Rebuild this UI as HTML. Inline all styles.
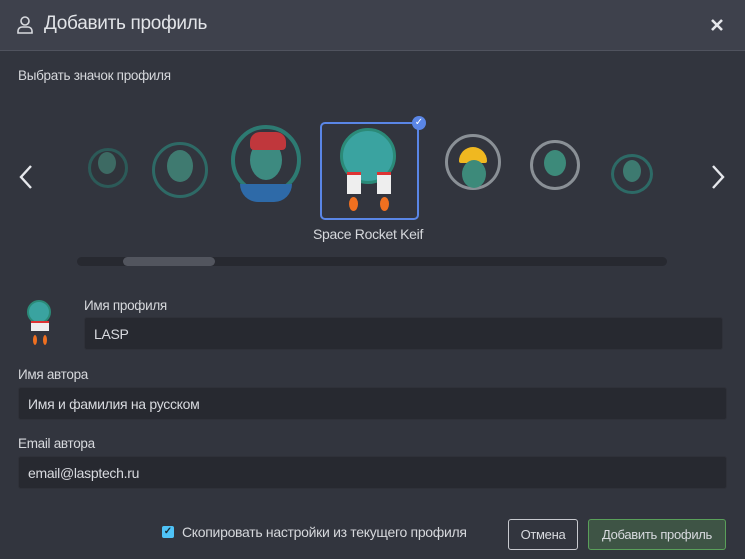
<!DOCTYPE html>
<html><head><meta charset="utf-8"><style>
*{box-sizing:border-box;margin:0;padding:0}
body{width:745px;height:559px;background:#32353e;font-family:"Liberation Sans",sans-serif;color:#d6d8dc;position:relative;overflow:hidden}
.hdr{position:absolute;left:0;top:0;width:745px;height:51px;background:#3e414c;border-bottom:1px solid #50535e}
.hdr .t{position:absolute;left:44px;top:13px;font-size:19px;color:#e2e4e8;letter-spacing:-0.3px}
.lbl{position:absolute;font-size:13.5px;color:#d6d8dc;letter-spacing:-0.3px}
.inp{position:absolute;background:#272930;border:1px solid #2f3139;border-radius:3px;font-size:14px;color:#d8dadf;padding-left:9px;display:flex;align-items:center;letter-spacing:-0.3px}
.av{position:absolute;border-radius:50%}
.btn{position:absolute;border-radius:3px;font-size:13px;display:flex;align-items:center;justify-content:center;letter-spacing:-0.3px}
</style></head><body>
<div class="hdr">
<svg style="position:absolute;left:16px;top:15px" width="18" height="20" viewBox="0 0 18 20" fill="none" stroke="#d8dadf" stroke-width="1.6"><circle cx="9" cy="6" r="4"/><path d="M2 18v-2a4 4 0 0 1 4-4h6a4 4 0 0 1 4 4v2z"/></svg>
<div class="t">Добавить профиль</div>
<svg style="position:absolute;left:710px;top:18px" width="14" height="14" viewBox="0 0 14 14" stroke="#e6e8ec" stroke-width="2.6"><path d="M2 2L12 12M12 2L2 12"/></svg>
</div>
<div class="lbl" style="left:18px;top:68px">Выбрать значок профиля</div>
<svg style="position:absolute;left:18px;top:164px" width="16" height="26" viewBox="0 0 16 26" fill="none" stroke="#e6e8ec" stroke-width="2.4"><path d="M13 2L3 13L13 24"/></svg>
<svg style="position:absolute;left:710px;top:164px" width="16" height="26" viewBox="0 0 16 26" fill="none" stroke="#e6e8ec" stroke-width="2.4"><path d="M3 2L13 13L3 24"/></svg>
<!-- avatars -->
<div class="av" style="left:88px;top:148px;width:40px;height:40px;border:3px solid #2c5a58;background:#30343b"></div>
<div class="av" style="left:98px;top:152px;width:18px;height:22px;background:#3d6a63"></div>
<div class="av" style="left:152px;top:142px;width:56px;height:56px;border:3px solid #2e6a66"></div>
<div class="av" style="left:167px;top:150px;width:26px;height:32px;background:#3f7a70"></div>
<div class="av" style="left:231px;top:125px;width:70px;height:70px;border:4px solid #2d7a72"></div>
<div class="av" style="left:250px;top:140px;width:32px;height:40px;background:#3d8a80"></div>
<div style="position:absolute;left:250px;top:132px;width:36px;height:18px;background:#c0373c;border-radius:10px 10px 4px 4px"></div>
<div style="position:absolute;left:240px;top:184px;width:52px;height:18px;background:#2e6aa8;border-radius:0 0 26px 26px"></div>
<div style="position:absolute;left:320px;top:122px;width:99px;height:98px;border:2px solid #5a86e6;border-radius:5px"></div>
<div style="position:absolute;left:412px;top:116px;width:14px;height:14px;border-radius:50%;background:#5a86e6;color:#fff;font-size:10px;text-align:center;line-height:14px">✓</div>
<div class="av" style="left:340px;top:128px;width:56px;height:56px;border:3px solid #2b8a78;background:#3aa3a0"></div>
<div style="position:absolute;left:347px;top:172px;width:14px;height:22px;background:#eee;border-top:3px solid #d33"></div>
<div style="position:absolute;left:377px;top:172px;width:14px;height:22px;background:#eee;border-top:3px solid #d33"></div>
<div class="av" style="left:349px;top:197px;width:9px;height:14px;background:#f07020"></div>
<div class="av" style="left:380px;top:197px;width:9px;height:14px;background:#f07020"></div>
<div style="position:absolute;left:313px;top:226px;font-size:14px;color:#d6d8dc;letter-spacing:-0.3px">Space Rocket Keif</div>
<div class="av" style="left:445px;top:134px;width:56px;height:56px;border:3px solid #8a9096"></div>
<div style="position:absolute;left:459px;top:147px;width:28px;height:16px;background:#f0b820;border-radius:14px 14px 2px 2px"></div>
<div class="av" style="left:462px;top:160px;width:24px;height:28px;background:#3d8a7a"></div>
<div class="av" style="left:530px;top:140px;width:50px;height:50px;border:3px solid #8a9096"></div>
<div class="av" style="left:544px;top:150px;width:22px;height:26px;background:#3d8a7a"></div>
<div class="av" style="left:611px;top:154px;width:42px;height:40px;border:3px solid #2d6a66"></div>
<div class="av" style="left:623px;top:160px;width:18px;height:22px;background:#3d7a70"></div>
<!-- scrollbar -->
<div style="position:absolute;left:77px;top:257px;width:590px;height:9px;background:#272930;border-radius:5px"></div>
<div style="position:absolute;left:123px;top:257px;width:92px;height:9px;background:#52555e;border-radius:5px"></div>
<!-- small avatar -->
<div class="av" style="left:27px;top:300px;width:24px;height:24px;background:#3aa3a0;border:2px solid #2b8a78"></div>
<div style="position:absolute;left:31px;top:321px;width:18px;height:10px;background:#eee;border-top:2px solid #d33"></div>
<div class="av" style="left:33px;top:335px;width:4px;height:10px;background:#f07020"></div>
<div class="av" style="left:43px;top:335px;width:4px;height:10px;background:#f07020"></div>
<div class="lbl" style="left:84px;top:298px">Имя профиля</div>
<div class="inp" style="left:84px;top:317px;width:639px;height:33px">LASP</div>
<div class="lbl" style="left:18px;top:367px">Имя автора</div>
<div class="inp" style="left:18px;top:387px;width:709px;height:33px">Имя и фамилия на русском</div>
<div class="lbl" style="left:18px;top:436px">Email автора</div>
<div class="inp" style="left:18px;top:456px;width:709px;height:33px">email@lasptech.ru</div>
<div style="position:absolute;left:162px;top:526px;width:12px;height:12px;background:#4fc3f7;border-radius:2px;color:#1a2a33;font-size:10px;line-height:12px;text-align:center;font-weight:bold">✓</div>
<div class="lbl" style="left:182px;top:524px;font-size:14px">Скопировать настройки из текущего профиля</div>
<div class="btn" style="left:508px;top:519px;width:70px;height:31px;border:1px solid #c8cacf;color:#d8dadf">Отмена</div>
<div class="btn" style="left:588px;top:519px;width:138px;height:31px;border:1px solid #5aa05a;background:#3e5445;color:#d8dadf">Добавить профиль</div>
</body></html>
